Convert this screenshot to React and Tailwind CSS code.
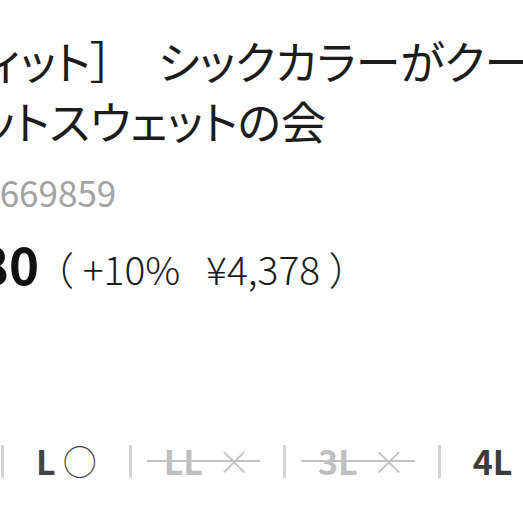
export default function App() {
  const sizes = [
    { label: 'L', mark: '○', out: false },
    { label: 'LL', mark: '×', out: true },
    { label: '3L', mark: '×', out: true },
  ];

  return (
    <div className="w-[523px] h-[523px] overflow-hidden bg-white text-[#1c1c1c] font-['Noto_Sans_CJK_JP','Noto_Sans',sans-serif]">
      {/* title, two visible lines */}
      <div className="pt-[31px] text-[45px] leading-[60px] [font-feature-settings:'palt']">
        <div className="whitespace-nowrap ml-[-51px]">フィット］　シックカラーがクール</div>
        <div className="whitespace-nowrap ml-[-62px]">ニットスウェットの会</div>
      </div>

      {/* item number */}
      <div className="mt-[21px] whitespace-nowrap ml-[-117px] text-[35px] leading-[40px] text-[#a3a3a3]">
        品番 12669859
      </div>

      {/* price */}
      <div className="mt-[21px] flex items-baseline whitespace-nowrap ml-[-128px] h-[60px] leading-[60px]">
        <span className="text-[51px] font-bold text-[#111]">¥3,980</span>
        <span className="ml-[-4px] text-[39px] font-light">（ +10%&nbsp;&nbsp;&nbsp;¥4,378 ）</span>
      </div>

      {/* sizes */}
      <div className="mt-[148px] flex items-center gap-[32px] whitespace-nowrap ml-[1px] h-[40px] text-[34px] leading-[40px]">
        <span className="w-[3px] h-[33px] bg-[#d4d4d4]" />
        {sizes.map((s) => (
          <div key={s.label} className="flex items-center gap-[32px]">
            <span className={`relative flex items-center ${s.out ? 'gap-[14px] text-[#bfbfbf]' : 'gap-[7px] text-[#444]'}`}>
              <span className="font-semibold">{s.label}</span>
              <span className="font-light">{s.mark}</span>
              {s.out && (
                <span className="absolute left-[-17px] right-[-9px] top-1/2 h-[2px] -translate-y-1/2 bg-[#c2c2c2]" />
              )}
            </span>
            <span className="w-[3px] h-[33px] bg-[#d4d4d4]" />
          </div>
        ))}
        <span className="font-semibold text-[#3c3c3c]">4L</span>
      </div>
    </div>
  );
}
